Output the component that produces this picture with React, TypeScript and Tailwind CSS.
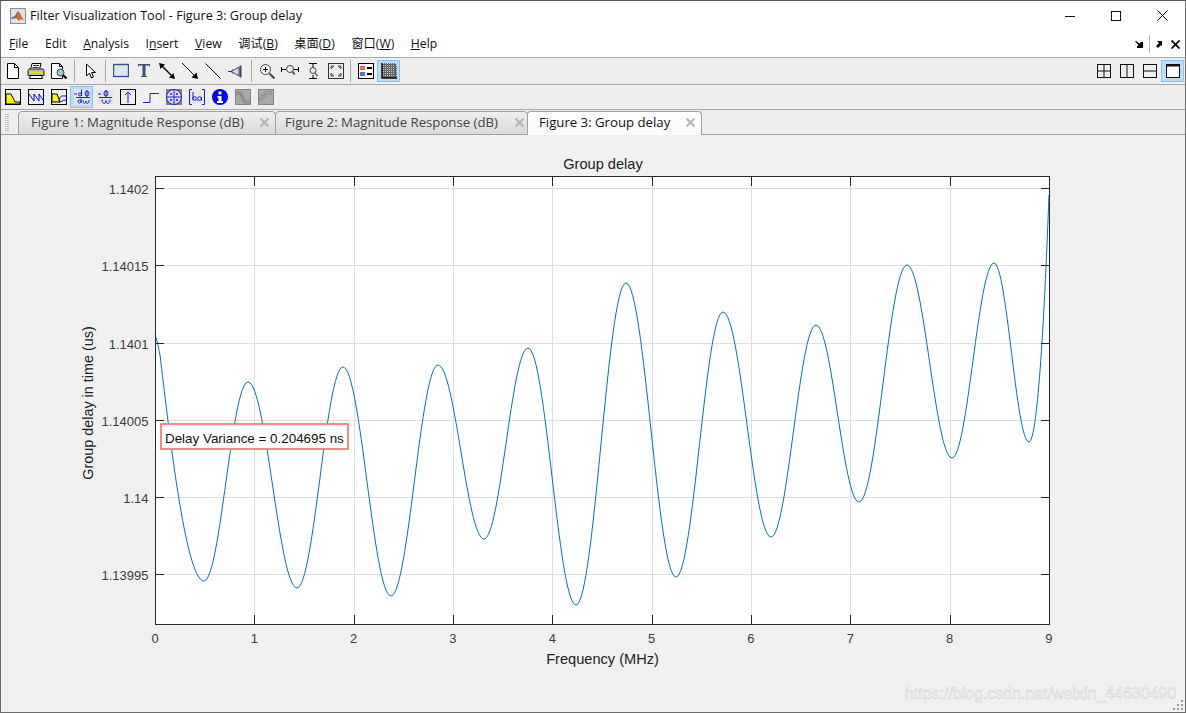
import React from "react";

const ui = "font-['Open_Sans','Noto_Sans_CJK_SC',sans-serif]";

const extrema: [number, number][] = [
  [155, 335], [204, 581], [248, 382], [297, 588], [343, 367], [391, 596], [438, 365], [484, 539],
  [528, 348], [576, 605], [626, 283], [676, 577], [723, 312], [771, 537], [816, 325], [859, 502],
  [907, 265], [952, 458], [994, 263], [1029, 442],
];
function curvePath() {
  let d = `M155 335 C157 340 158 345 160 355 C168 420 185 581 204 581`;
  for (let i = 2; i < extrema.length; i++) {
    const [x0, y0] = extrema[i - 1];
    const [x1, y1] = extrema[i];
    const k = (x1 - x0) * 0.37;
    d += ` C${x0 + k} ${y0} ${x1 - k} ${y1} ${x1} ${y1}`;
  }
  d += ` C1037 442 1044 330 1049 195`;
  return d;
}

const Ico = ({ children, w = 16 }: { children: React.ReactNode; w?: number }) => (
  <svg width={w} height={16} viewBox={`0 0 ${w} 16`} fill="none" stroke="#000" strokeWidth={1}>
    {children}
  </svg>
);

function Btn({ children, on, w = 23 }: { children: React.ReactNode; on?: boolean; w?: number }) {
  return (
    <div
      className={`flex items-center justify-center h-[22px] ${on ? "bg-[#bcdcf4] border border-[#8cc4f0]" : ""}`}
      style={{ width: w }}
    >
      {children}
    </div>
  );
}

const Sep = ({ w }: { w: number }) => (
  <div className="flex justify-center h-[22px]" style={{ width: w }}>
    <div className="w-px h-full bg-[#a8a8a8]" />
  </div>
);

const GrayBox = ({ children }: { children: React.ReactNode }) => (
  <Ico><rect x=".5" y=".5" width="15" height="15" fill="#a8a8a8" stroke="#858585" />{children}</Ico>
);

const row1a = [
  <Ico><path d="M2.500 .5h7l4 4v11h-11z" fill="#fff" /><path d="M9.500 .5v4h4" /></Ico>,
  <Ico w={18}><path d="M5 .5h9l-1.500 6H3.500z" fill="#fff" /><path d="M1 7.500l1-1.500h14l1 1.500v5H1z" fill="#bbb" stroke="#222" /><path d="M2.500 9.500h13" stroke="#f2e200" strokeWidth="1.500" /><path d="M3.500 12.500h11l1 3h-13z" fill="#fff" /><path d="M6 2.500h6M5.500 4.500h6" stroke="#333" /></Ico>,
  <Ico><path d="M.5 .5h8l3 3v12H.5z" fill="#fff" /><path d="M8.500 .5v3h3" /><circle cx="9.500" cy="9.500" r="3.500" fill="#9cc8d0" stroke="#444" /><path d="M12 12l3.500 3.500" strokeWidth="2.200" /></Ico>,
];

const row2 = [
  <Ico><rect x=".5" y=".5" width="15" height="15" fill="#eee" /><path d="M1 5h5l4 8h5v2H1z" fill="#ff0" stroke="#000" /></Ico>,
  <Ico><rect x=".5" y=".5" width="15" height="15" fill="#eee" /><path d="M1 5l5 7V5l5 7V5l4 6" stroke="#00f" /></Ico>,
  <Ico><rect x=".5" y=".5" width="15" height="15" fill="#eee" /><path d="M1 5h5l3 8H1z" fill="#ff0" stroke="#000" /><path d="M8 12c1-6 3-5 7-5M8 13c3 0 3-2 7-2" stroke="#00f" /></Ico>,
  <Ico><rect x="0" y="0" width="16" height="16" fill="#dde6ee" stroke="none" /><g stroke="#1a1ae6"><path d="M0 5h3M2 8.500h14M7.500 .5v6.500M13 1v7" /><circle cx="6" cy="5.500" r="1.500" /><ellipse cx="13" cy="4.500" rx="2" ry="2.500" /><circle cx="5.500" cy="12.500" r="1.500" /><path d="M7 9.500v4.500M9 11c0 5 3 4 3 1 0 3 3 4 3-1" /></g></Ico>,
  <Ico><rect x="0" y="1" width="16" height="14" fill="#e4e4e4" stroke="none" /><g stroke="#1a1ae6"><path d="M1 5h3M2 8.500h13M9 1v7" /><ellipse cx="9" cy="4.500" rx="2" ry="2.500" /><path d="M5 10.500c0 5 4 5 4 1 0 4 4 4 4-1" /></g></Ico>,
  <Ico><rect x=".5" y=".5" width="15" height="15" fill="#eee" /><path d="M8 14V3M5 6l3-3 3 3" stroke="#1a1ae6" /></Ico>,
  <Ico><rect x="0" y="1" width="16" height="15" fill="#f4f4f4" stroke="none" /><path d="M0 13.500h7V4.500h9" stroke="#1a1ae6" /></Ico>,
  <Ico><rect x="0" y="0" width="16" height="16" fill="#808080" stroke="none" /><circle cx="8" cy="8" r="7.500" fill="#dcdcf0" stroke="#1a1ae6" /><path d="M8 .5v15M.5 8h15" stroke="#1a1ae6" /><circle cx="5" cy="5" r="1" fill="#1a1ae6" stroke="none" /><circle cx="11" cy="5" r="1" fill="#1a1ae6" stroke="none" /><circle cx="5" cy="11" r="1" fill="#1a1ae6" stroke="none" /><circle cx="11" cy="11" r="1" fill="#1a1ae6" stroke="none" /></Ico>,
  <Ico><rect x="1" y="1" width="14" height="14" fill="#e8e8e8" stroke="none" /><g stroke="#1a1ae6"><path d="M3 .5H.5v15H3M13 .5h2.500v15H13M4 3v8" /><circle cx="5.500" cy="9.500" r="1.800" /><circle cx="10.500" cy="9.500" r="1.800" /><path d="M12.500 8v3.500M7.800 12l.7-1" /></g></Ico>,
  <Ico><circle cx="8" cy="8" r="8" fill="#0000f0" stroke="none" /><rect x="6.500" y="2.500" width="3" height="3" fill="#fff" stroke="none" /><path d="M5.500 7h4v5h1.500v2H5v-2h1.500V9h-1z" fill="#fff" stroke="none" /></Ico>,
  <GrayBox><path d="M1 3h5l4 9h5M1 5h4l4 9h6" stroke="#808080" strokeWidth="1.200" /></GrayBox>,
  <GrayBox><path d="M1 11h4V8h3V5h6M1 9h3V6h3V3h7" stroke="#808080" strokeDasharray="1.500 1" /></GrayBox>,
];

const Tab = ({ label, w, active, pl, mr }: { label: string; w: number; active?: boolean; pl: number; mr: number }) => (
  <div
    className={`flex items-center h-[24px] -mb-px rounded-t-[4px] border border-[#a0a0a0] pb-px ${
      active
        ? "bg-gradient-to-b from-[#ffffff] to-[#fafafa] border-b-transparent text-[#111]"
        : "bg-gradient-to-b from-[#eeeeee] to-[#dadada] text-[#444] -mr-px"
    }`}
    style={{ width: w, paddingLeft: pl }}
  >
    <span className="flex-1 text-[13.2px] whitespace-nowrap">{label}</span>
    <svg width="11" height="11" viewBox="0 0 11 11" stroke="#b4b4b4" strokeWidth="2" style={{ marginRight: mr }}>
      <path d="M1.500 1.500l8 8M9.500 1.500l-8 8" />
    </svg>
  </div>
);

const yt: [number, string][] = [[188, "1.1402"], [265, "1.14015"], [343, "1.1401"], [420, "1.14005"], [497, "1.14"], [574, "1.13995"]];
const xs = Array.from({ length: 10 }, (_, i) => 155 + i * 99.33);

function Chart() {
  return (
    <svg viewBox="1 135 1184 577" width="1184" height="577" className="block font-['Liberation_Sans',sans-serif]">
      <rect x="155.500" y="176.500" width="894" height="448" fill="#fff" />
      <g stroke="#dfdfdf" shapeRendering="crispEdges">
        {xs.slice(1, 9).map((x) => <path key={x} d={`M${Math.round(x) + 0.5} 177V624`} />)}
        {yt.map(([y]) => <path key={y} d={`M156 ${y + 0.5}H1049`} />)}
      </g>
      <path d={curvePath()} fill="none" stroke="#0072bd" strokeWidth="1" />
      <rect x="155.500" y="176.500" width="894" height="448" fill="none" stroke="#262626" shapeRendering="crispEdges" />
      <g stroke="#262626" shapeRendering="crispEdges">
        {xs.map((x) => <path key={x} d={`M${Math.round(x) + 0.5} 177v9M${Math.round(x) + 0.5} 624v-9`} />)}
        {yt.map(([y]) => <path key={y} d={`M156 ${y + 0.5}h8M1049 ${y + 0.5}h-8`} />)}
      </g>
      <g fontSize="13" fill="#3c3c3c">
        {yt.map(([y, t]) => <text key={y} x="148.500" y={y + 5.5} textAnchor="end">{t}</text>)}
        {xs.map((x, i) => <text key={i} x={x} y="643" textAnchor="middle">{i}</text>)}
      </g>
      <text x="603" y="169" textAnchor="middle" fontSize="14.600" fill="#222">Group delay</text>
      <text x="602.500" y="664" textAnchor="middle" fontSize="14.600" fill="#222">Frequency (MHz)</text>
      <text x="0" y="0" transform="translate(93 403) rotate(-90)" textAnchor="middle" fontSize="14.400" fill="#222">Group delay in time (us)</text>
      <rect x="161" y="424" width="187" height="25" fill="#fff" stroke="#fb6a6a" strokeWidth="1.600" />
      <text x="165" y="442.500" fontSize="13.400" fill="#111">Delay Variance = 0.204695 ns</text>
      <text x="905" y="699" fontSize="15.950" fill="#f6f6f6" stroke="#cfcfcf" strokeWidth="0.5">https://blog.csdn.net/weixin_44630490</text>
    </svg>
  );
}

export default function App() {
  return (
    <div className={`w-[1186px] h-[713px] flex flex-col bg-white border border-[#6b6b6b] border-t-[#555] overflow-hidden relative ${ui}`}>
      <div className="h-[29px] shrink-0 flex items-center pl-[9px]">
        <svg width="16" height="16" viewBox="0 0 16 16" className="mt-px">
          <rect x=".5" y=".5" width="15" height="15" fill="#dde3ea" stroke="#8a8f96" />
          <path d="M1 10l4-2 3-5 2 2 4 8-3-2-2 2-3-3-2 1z" fill="#e8661a" />
          <path d="M1 10l4-2 3-5-1 6-3 1-2 1z" fill="#3b7dbd" />
        </svg>
        <span className="ml-[4px] text-[12.65px] text-[#111] whitespace-nowrap">Filter Visualization Tool - Figure 3: Group delay</span>
        <div className="ml-auto flex h-full">
          <div className="w-[46px] flex items-center justify-center"><svg width="10" height="10" stroke="#111"><path d="M0 5.500h10" /></svg></div>
          <div className="w-[46px] flex items-center justify-center"><svg width="10" height="10" stroke="#111" fill="none"><rect x=".5" y=".5" width="9" height="9" /></svg></div>
          <div className="w-[46px] flex items-center justify-center"><svg width="11" height="11" stroke="#111"><path d="M.5.5l10 10M10.500.5l-10 10" /></svg></div>
        </div>
      </div>
      <div className="h-[28px] shrink-0 flex items-center border-b border-[#a8a8a8] pl-[8px] pt-[1px] text-[12.2px] text-[#111]">
        <div className="flex gap-[16.6px] whitespace-nowrap">
          <span><u>F</u>ile</span>
          <span>Edit</span>
          <span><u>A</u>nalysis</span>
          <span>I<u>n</u>sert</span>
          <span><u>V</u>iew</span>
          <span>调试(<u>B</u>)</span>
          <span>桌面(<u>D</u>)</span>
          <span>窗口(<u>W</u>)</span>
          <span><u>H</u>elp</span>
        </div>
        <div className="ml-auto flex items-center mr-[5px]">
          <svg width="8" height="7" viewBox="0 0 8 7" fill="#000"><path d="M0 .5L1 0l3.500 2.500L6 1h2v6H2V5.500L3.500 4z" /></svg>
          <div className="w-px h-[18px] bg-[#bbb] mx-[6px]" />
          <svg width="6" height="7" viewBox="0 0 6 7" fill="#000"><path d="M1 0h5v5L5 4 2 7 0 5l3-3z" /></svg>
          <svg width="9" height="9" viewBox="0 0 9 9" stroke="#000" strokeWidth="1.700" className="ml-[9px]"><path d="M.5.5l8 8M8.500.5l-8 8" /></svg>
        </div>
      </div>
      <div className="h-[27px] shrink-0 flex items-center border-b border-[#a8a8a8] bg-[#eeeeee] pb-px">
        {row1a.map((c, i) => <Btn key={i}>{c}</Btn>)}
        <Sep w={9} />
        <Btn><Ico w={12}><path d="M1.500 1v12l3-3 2 5 2-1-2-4.500h4z" fill="#fff" /></Ico></Btn>
        <Sep w={7} />
        <Btn><Ico><rect x=".5" y="1.500" width="15" height="12" fill="#dfe6ee" stroke="#34548a" strokeWidth="1.400" /></Ico></Btn>
        <Btn><Ico w={12}><path d="M0 1h12v3l-1-1.500H7.500V13H9v1H3v-1h1.500V2.500H1L0 4z" fill="#3b4f78" stroke="none" /></Ico></Btn>
        <Btn><Ico><path d="M2 2l12 12" strokeWidth="1.400" /><path d="M0 0l6 1.500L1.500 6zM16 16l-6-1.500 4.500-4.500z" fill="#000" stroke="none" /></Ico></Btn>
        <Btn><Ico><path d="M0 0l12 12" /><path d="M16 16l-6.500-1.500 5-5z" fill="#000" stroke="none" /></Ico></Btn>
        <Btn><Ico><path d="M.5.5l15 15" /></Ico></Btn>
        <Btn><Ico><path d="M0 8.500h4" stroke="#334" /><path d="M4 7h2l5-3v9l-5-3H4z" fill="#cfd8e4" stroke="#445" /><path d="M12.500 2.500v12" stroke="#445" strokeWidth="2" /></Ico></Btn>
        <Sep w={8} />
        <Btn><Ico><circle cx="6.500" cy="6.500" r="5" fill="#f2f2f8" stroke="#444" /><path d="M4 6.500h5M6.500 4v5" /><path d="M10.500 10.500l5 5" strokeWidth="2" stroke="#444" /></Ico></Btn>
        <Btn><Ico w={18}><circle cx="9" cy="6" r="3.500" stroke="#444" fill="#eef" /><path d="M11.500 8.500l2 3" strokeWidth="1.600" stroke="#444" /><path d="M.5 4v5M17.500 4v5M1 6.500h4M13 6.500h4" /></Ico></Btn>
        <Btn><Ico w={14}><path d="M3 .5h8M7 1v4M3 15.500h8M7 12v3" /><circle cx="7" cy="7.500" r="3" stroke="#444" fill="#eee" /><path d="M9 10l2.500 3" strokeWidth="1.600" stroke="#666" /></Ico></Btn>
        <Btn><Ico><rect x=".5" y=".5" width="15" height="15" fill="#eee" stroke="#333" /><path d="M3 6V3h3L3 6zM13 6V3h-3l3 3zM3 10v3h3l-3-3zM13 10v3h-3l3-3z" stroke="#555" fill="#ccc" /></Ico></Btn>
        <Sep w={7} />
        <Btn><Ico><rect x=".5" y=".5" width="15" height="15" fill="#fff" /><rect x="2" y="3" width="5" height="4" fill="#ee6666" stroke="none" /><rect x="2" y="9" width="5" height="4" fill="#5a6fd8" stroke="none" /><path d="M9 5h5M9 11h5" strokeWidth="2" /></Ico></Btn>
        <Btn on><Ico><rect x="1.500" y="1.500" width="13" height="13" fill="#c8ccd0" stroke="#555" /><path d="M3.500 0v14M5.500 0v14M7.500 0v14M9.500 0v14M11.500 0v14M13.500 0v14M2 3.500h14M2 5.500h14M2 7.500h14M2 9.500h14M2 11.500h14M2 13.500h14" stroke="#666" /><path d="M1 0v15h15" stroke="#111" strokeWidth="1.500" /></Ico></Btn>
        <div className="ml-auto flex items-center mr-px">
          <Btn w={23}><svg width="14" height="14" fill="none" stroke="#111"><rect x=".5" y=".5" width="13" height="13" /><path d="M7 0v14M0 7h14" /></svg></Btn>
          <Btn w={23}><svg width="14" height="14" fill="none" stroke="#111"><rect x=".5" y=".5" width="13" height="13" /><path d="M7 0v14" /></svg></Btn>
          <Btn w={23}><svg width="14" height="14" fill="none" stroke="#111"><rect x=".5" y=".5" width="13" height="13" /><path d="M0 7h14" /></svg></Btn>
          <Btn w={23} on><svg width="14" height="14" fill="#fff" stroke="#111"><rect x=".5" y=".5" width="13" height="13" /><path d="M0 1.500h14" strokeWidth="2" /></svg></Btn>
        </div>
      </div>
      <div className="h-[25px] shrink-0 flex items-center border-b border-[#a8a8a8] bg-[#eeeeee] pb-px">
        {row2.map((c, i) => <Btn key={i} on={i === 3}>{c}</Btn>)}
      </div>
      <div className="h-[25px] shrink-0 flex items-end border-b border-[#a0a0a0] bg-[#eeeeee] pl-[17px] relative">
        <div className="absolute left-[4px] top-[4px] w-[4px] h-[18px] bg-[repeating-linear-gradient(#c0c0c0_0_1px,transparent_1px_2px)]" />
        <Tab label="Figure 1: Magnitude Response (dB)" w={258} pl={12} mr={5} />
        <Tab label="Figure 2: Magnitude Response (dB)" w={253} pl={9} mr={2} />
        <Tab label="Figure 3: Group delay" w={175} pl={11} mr={5} active />
      </div>
      <div className="flex-1 bg-[#f0f0f0] min-h-0">
        <Chart />
      </div>
      <svg width="11" height="11" viewBox="0 0 11 11" fill="#9a9a9a" className="absolute right-[1px] bottom-[1px]">
        <rect x="8" y="0" width="2" height="2" /><rect x="4" y="4" width="2" height="2" /><rect x="8" y="4" width="2" height="2" />
        <rect x="0" y="8" width="2" height="2" /><rect x="4" y="8" width="2" height="2" /><rect x="8" y="8" width="2" height="2" />
      </svg>
    </div>
  );
}
